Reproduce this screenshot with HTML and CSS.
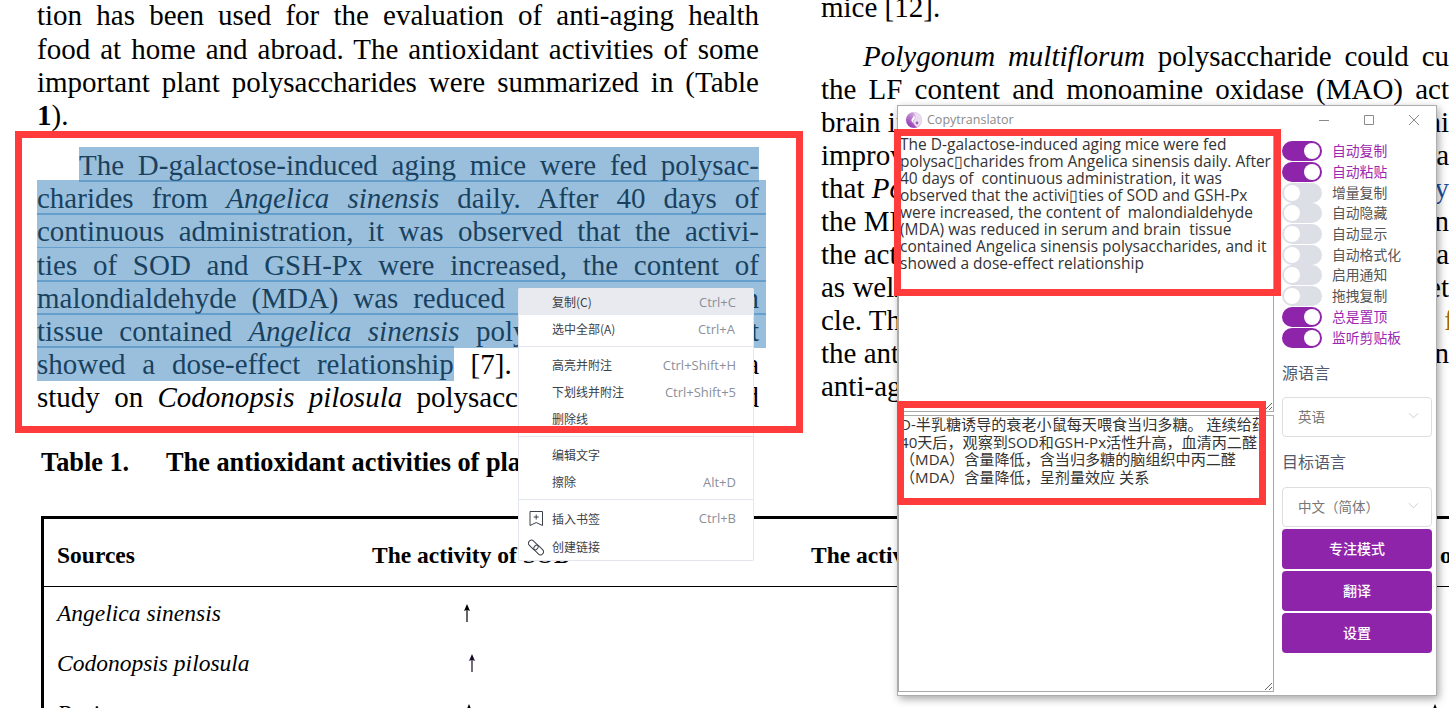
FILE: index.html
```html
<!DOCTYPE html>
<html lang="zh">
<head>
    <meta charset="UTF-8">
    <title>Copytranslator</title>
    <link rel="stylesheet" href="styles.css">
</head>
<body>
    <div class="pdf">
        <div class="col-left">
            <div class="line">tion has been used for the evaluation of anti-aging health</div>
            <div class="line">food at home and abroad. The antioxidant activities of some</div>
            <div class="line">important plant polysaccharides were summarized in (Table</div>
            <div class="line end"><b>1</b>).</div>

            <div class="line indent para"><span class="sel">The D-galactose-induced aging mice were fed polysac-</span></div>
            <div class="line"><span class="sel wide">charides from <i>Angelica sinensis</i> daily. After 40 days of</span></div>
            <div class="line"><span class="sel wide">continuous administration, it was observed that the activi-</span></div>
            <div class="line"><span class="sel wide">ties of SOD and GSH-Px were increased, the content of</span></div>
            <div class="line"><span class="sel wide">malondialdehyde (MDA) was reduced in serum and brain</span></div>
            <div class="line"><span class="sel wide">tissue contained <i>Angelica sinensis</i> polysaccharides, and it</span></div>
            <div class="line"><span class="sel">showed a dose-effect relationship</span> [7]. In another Chin a</div>
            <div class="line">study on <i>Codonopsis pilosula</i> polysaccharides it was used</div>

            <div class="caption"><span class="caption-no">Table 1.</span>The antioxidant activities of plant polysaccharides</div>
        </div>

        <div class="col-right">
            <div class="line end">mice [12].</div>
            <div class="line indent para2"><i>Polygonum multiflorum</i> polysaccharide could cu</div>
            <div class="line">the LF content and monoamine oxidase (MAO) act</div>
            <div class="line split"><span>brain in</span><span>ni</span></div>
            <div class="line split"><span>improv</span><span>ra</span></div>
            <div class="line split"><span>that <i>Po</i></span><span class="link">ly</span></div>
            <div class="line split"><span>the MD</span><span>in</span></div>
            <div class="line split"><span>the act</span><span>ra</span></div>
            <div class="line split"><span>as well</span><span>et</span></div>
            <div class="line split"><span>cle. Th</span><span class="ref">f</span></div>
            <div class="line split"><span>the ant</span><span>n</span></div>
            <div class="line end">anti-ag</div>
        </div>

        <div class="table">
            <div class="row head">
                <div class="cell-a">Sources</div>
                <div class="cell-b">The activity of SOD</div>
                <div class="cell-c">The activity of MDA</div>
                <div class="cell-d">o</div>
            </div>
            <div class="row">
                <div class="cell-a"><i>Angelica sinensis</i></div>
                <div class="cell-b"><svg class="arrow arrow-1" viewBox="0 0 8 18"><path d="M4 0 L7 7 L4.6 6 V18 H3.4 V6 L1 7 Z"/></svg></div>
            </div>
            <div class="row">
                <div class="cell-a"><i>Codonopsis pilosula</i></div>
                <div class="cell-b"><svg class="arrow arrow-2" viewBox="0 0 8 18"><path d="M4 0 L7 7 L4.6 6 V18 H3.4 V6 L1 7 Z"/></svg></div>
            </div>
            <div class="row">
                <div class="cell-a"><i>Poria</i></div>
                <div class="cell-b"><svg class="arrow arrow-3" viewBox="0 0 8 18"><path d="M4 0 L7 7 L4.6 6 V18 H3.4 V6 L1 7 Z"/></svg></div>
                <div class="cell-c"><svg class="arrow arrow-4" viewBox="0 0 8 18"><path d="M4 0 L7 7 L4.6 6 V18 H3.4 V6 L1 7 Z"/></svg></div>
            </div>
        </div>
    </div>

    <!-- 右键菜单 -->
    <div class="menu">
        <div class="menu-item hover"><span>复制(C)</span><span class="key">Ctrl+C</span></div>
        <div class="menu-item"><span>选中全部(A)</span><span class="key key-2">Ctrl+A</span></div>
        <div class="menu-sep"></div>
        <div class="menu-item"><span>高亮并附注</span><span class="key">Ctrl+Shift+H</span></div>
        <div class="menu-item"><span>下划线并附注</span><span class="key">Ctrl+Shift+5</span></div>
        <div class="menu-item"><span>删除线</span></div>
        <div class="menu-sep"></div>
        <div class="menu-item"><span>编辑文字</span></div>
        <div class="menu-item"><span>擦除</span><span class="key">Alt+D</span></div>
        <div class="menu-sep"></div>
        <div class="menu-item tall">
            <svg class="menu-icon" viewBox="0 0 16 17"><path d="M2 1.5 H14.5 V15.5 L8.2 12.5 L2 15.5 Z M8.2 4.5 V9.5 M5.7 7 H10.7"/></svg>
            <span>插入书签</span><span class="key">Ctrl+B</span>
        </div>
        <div class="menu-item tall">
            <svg class="menu-icon" viewBox="0 0 16 17">
                <rect x="-0.2" y="3" width="11" height="6" rx="3" transform="rotate(45 5.3 6)"/>
                <rect x="5.2" y="8" width="11" height="6" rx="3" transform="rotate(45 10.7 11)"/>
            </svg>
            <span>创建链接</span>
        </div>
    </div>

    <div class="mark mark-pdf"></div>

    <!-- 翻译窗口 -->
    <div class="window">
        <div class="titlebar">
            <svg class="logo" viewBox="0 0 16 16">
                <defs>
                    <linearGradient id="logoFill" x1="0.9" y1="0" x2="0.2" y2="1">
                        <stop offset="0" stop-color="#e3cdeb"/>
                        <stop offset="1" stop-color="#8e2fae"/>
                    </linearGradient>
                </defs>
                <circle cx="8" cy="8" r="8" fill="url(#logoFill)"/>
                <path d="M7 0 C10 3 10 6 8 8 C6 10 8 13 11 15.2 C14 14 16 11 16 8 C16 3.6 12 0 8 0 Z" fill="#e9dcef"/>
                <path d="M7.5 2.5 C9 4 9.5 6 8 7.5 C7 8.5 6.5 9.5 7 11 C5 9.5 5 7.5 6.5 6 C7.5 5 8 4 7.5 2.5 Z" fill="#fff"/>
                <circle cx="11" cy="11" r="1.4" fill="#a45cc0"/>
            </svg>
            <span class="title">Copytranslator</span>
            <div class="controls">
                <svg viewBox="0 0 10 10"><path d="M0 5.5 H10"/></svg>
                <svg viewBox="0 0 10 10"><path d="M.5 .5 H9.5 V9.5 H.5 Z"/></svg>
                <svg viewBox="0 0 10 10"><path d="M0 0 L10 10 M10 0 L0 10"/></svg>
            </div>
        </div>
        <div class="window-body">
            <div class="panes">
                <textarea class="pane pane-src" spellcheck="false">The D-galactose-induced aging mice were fed
polysac▯charides from Angelica sinensis daily. After
40 days of  continuous administration, it was
observed that the activi▯ties of SOD and GSH-Px
were increased, the content of  malondialdehyde
(MDA) was reduced in serum and brain  tissue
contained Angelica sinensis polysaccharides, and it
showed a dose-effect relationship</textarea>
                <textarea class="pane pane-dst" spellcheck="false">D-半乳糖诱导的衰老小鼠每天喂食当归多糖。 连续给药
40天后，观察到SOD和GSH-Px活性升高，血清丙二醛
（MDA）含量降低，含当归多糖的脑组织中丙二醛
（MDA）含量降低，呈剂量效应 关系</textarea>
            </div>
            <div class="side">
                <div class="switch-row on"><span class="switch"></span><span class="switch-label">自动复制</span></div>
                <div class="switch-row on"><span class="switch"></span><span class="switch-label">自动粘贴</span></div>
                <div class="switch-row"><span class="switch"></span><span class="switch-label">增量复制</span></div>
                <div class="switch-row"><span class="switch"></span><span class="switch-label">自动隐藏</span></div>
                <div class="switch-row"><span class="switch"></span><span class="switch-label">自动显示</span></div>
                <div class="switch-row"><span class="switch"></span><span class="switch-label">自动格式化</span></div>
                <div class="switch-row"><span class="switch"></span><span class="switch-label">启用通知</span></div>
                <div class="switch-row"><span class="switch"></span><span class="switch-label">拖拽复制</span></div>
                <div class="switch-row on"><span class="switch"></span><span class="switch-label">总是置顶</span></div>
                <div class="switch-row on"><span class="switch"></span><span class="switch-label">监听剪贴板</span></div>

                <div class="lang-label first">源语言</div>
                <div class="select"><span>英语</span><svg viewBox="0 0 12 7"><path d="M1 1 L6 6 L11 1"/></svg></div>
                <div class="lang-label">目标语言</div>
                <div class="select"><span>中文（简体）</span><svg viewBox="0 0 12 7"><path d="M1 1 L6 6 L11 1"/></svg></div>

                <button class="btn">专注模式</button>
                <button class="btn">翻译</button>
                <button class="btn">设置</button>
            </div>
        </div>
    </div>

    <div class="mark mark-src"></div>
    <div class="mark mark-dst"></div>
</body>
</html>
```

FILE: styles.css
```css
html, body { margin: 0; height: 100%; overflow: hidden; }
body {
  width: 1449px;
  height: 708px;
  position: relative;
  background: #fff;
  color: #000;
}

/* pdf page */
.pdf {
  display: grid;
  grid-template-columns: 722px 628px;
  column-gap: 62px;
  padding-left: 37px;
  height: 708px;
  overflow: hidden;
  font: 29px/33.2px "Liberation Serif", "Times New Roman", serif;
}
.col-left { min-width: 0; margin-top: -.6px; }
.col-right { min-width: 0; margin-top: -8.6px; }
.line { text-align: justify; text-align-last: justify; white-space: nowrap; height: 33.2px; }
.col-right .line { height: 33px; }
.line.end { text-align-last: left; }
.indent { padding-left: 42px; }
.para { margin-top: 16.8px; }
.para2 { margin-top: 15.6px; }
.split { display: flex; justify-content: space-between; }
.link { color: #1f4f9c; }
.ref { color: #a8620a; margin-right: -5px; }

.sel { position: relative; }
.sel::after {
  content: "";
  position: absolute;
  left: 0;
  right: 0;
  top: -2px;
  bottom: -1px;
  background: rgba(51, 127, 185, .5);
}
.sel.wide::after { right: -7px; }

.caption {
  margin: 33.2px 0 0 4px;
  font: bold 26.3px/30px "Liberation Serif", serif;
  white-space: nowrap;
}
.caption-no { display: inline-block; width: 125px; }

.table {
  grid-column: 1 / 3;
  margin: 38px 0 0 4px;
  border-top: 3px solid #000;
  border-left: 3px solid #000;
  font: 23.5px/30px "Liberation Serif", serif;
  width: 1410px;
}
.row { display: flex; height: 50px; box-sizing: border-box; padding-top: 3px; align-items: center; }
.row.head { height: 68px; padding: 5px 0 0 3px; border-bottom: 1px solid #000; font-weight: bold; margin-left: -3px; }
.cell-a { width: 328px; padding-left: 13px; box-sizing: border-box; flex: none; white-space: nowrap; }
.cell-b { width: 439px; flex: none; white-space: nowrap; }
.cell-c { width: 629px; flex: none; white-space: nowrap; }
.cell-d { flex: none; }
.arrow { display: block; width: 8px; height: 18px; fill: #000; }
.arrow-1 { margin-left: 91px; }
.arrow-2 { margin-left: 96px; fill: #1a0a2a; }
.arrow-3 { margin-left: 93px; }
.arrow-4 { margin-left: 620px; }

/* context menu */
.menu {
  position: absolute;
  left: 518px;
  top: 288px;
  width: 236px;
  height: 273px;
  box-sizing: border-box;
  background: #fff;
  border: 1px solid #e4e6ee;
  border-top: 0;
  border-radius: 2px;
  font: 12px "Noto Sans CJK SC", "Noto Sans", sans-serif;
  color: #3c4048;
}
.menu-item {
  height: 27px;
  display: flex;
  align-items: center;
  justify-content: space-between;
  padding: 0 17px 0 33px;
  position: relative;
}
.menu-item.hover { background: #e8eaef; }
.menu-item.tall { height: 28.5px; }
.menu-sep { height: 1px; background: #e4e6ee; margin: 4px 0; }
.key { color: #8b8f9a; font: 13px "Open Sans", sans-serif; }
.key-2 { margin-right: 1px; }
.menu-icon {
  position: absolute;
  left: 9px;
  top: 6px;
  width: 16px;
  height: 17px;
  fill: none;
  stroke: #3c4048;
  stroke-width: 1;
}

/* red annotation frames */
.mark { position: absolute; border: 7px solid #ff3b3b; box-sizing: border-box; }
.mark-pdf { left: 15px; top: 131px; width: 788px; height: 302px; }
.mark-src { left: 894px; top: 129px; width: 387px; height: 167px; }
.mark-dst { left: 897px; top: 401px; width: 369px; height: 104px; }

/* translator window */
.window {
  position: absolute;
  left: 897px;
  top: 105px;
  width: 540px;
  height: 591px;
  box-sizing: border-box;
  background: #fff;
  border: 1px solid #adadad;
  box-shadow: 2px 3px 8px rgba(0, 0, 0, .35);
  display: flex;
  flex-direction: column;
  font-family: "Open Sans", "Noto Sans CJK SC", sans-serif;
}
.titlebar { height: 24px; flex: none; display: flex; align-items: center; padding-left: 8px; padding-top: 3px; box-sizing: border-box; }
.logo { width: 16px; height: 16px; margin-right: 5px; }
.title { font-size: 12.5px; color: #8b8b8b; }
.controls { margin-left: auto; display: flex; gap: 35px; padding-right: 17px; }
.controls svg { width: 10px; height: 10px; fill: none; stroke: #8a8a8a; stroke-width: 1; }

.window-body { flex: 1; display: flex; min-height: 0; }
.panes { width: 376px; flex: none; display: flex; flex-direction: column; gap: 3px; padding-bottom: 3px; }
.pane {
  display: block;
  box-sizing: border-box;
  width: 100%;
  margin: 0;
  padding: 5px 1px 0 1px;
  border: 1px solid #a9a9a9;
  outline: 0;
  background: #fff;
  color: #333;
  font: 15.5px/17px "Open Sans", "Noto Sans CJK SC", sans-serif;
  white-space: pre;
  overflow: hidden;
  resize: both;
}
.pane-src { height: 282px; }
.pane-dst { flex: 1; padding-top: 0; font-size: 15.1px; line-height: 17.6px; }

.side { flex: 1; padding: 11px 4px 0 8px; min-width: 0; }
.switch-row {
  height: 20.7px;
  display: flex;
  align-items: center;
  gap: 10px;
  font: 13.8px "Noto Sans CJK SC", sans-serif;
  color: #555;
}
.switch-label { padding-bottom: 2px; }
.switch {
  width: 40px;
  height: 20px;
  flex: none;
  box-sizing: border-box;
  border-radius: 10px;
  background: #dcdfe6;
  position: relative;
}
.switch::after {
  content: "";
  position: absolute;
  left: 2px;
  top: 2px;
  width: 16px;
  height: 16px;
  border-radius: 50%;
  background: #fff;
}
.switch-row.on { color: #9c27b0; }
.switch-row.on .switch { background: #8e24aa; }
.switch-row.on .switch::after { left: 22px; }

.lang-label { font: 16px/18px "Noto Sans CJK SC", sans-serif; color: #515a6e; margin: 15px 0 17px; }
.lang-label.first { margin-bottom: 16px; }
.select {
  height: 40px;
  box-sizing: border-box;
  border: 1px solid #dcdee2;
  border-radius: 4px;
  display: flex;
  align-items: center;
  justify-content: space-between;
  padding: 0 12px 2px 15px;
  font: 13.5px "Noto Sans CJK SC", sans-serif;
  color: #777;
}
.select svg { width: 11px; height: 7px; fill: none; stroke: #c8c8c8; stroke-width: 1; }
.btn {
  display: block;
  width: 100%;
  height: 40px;
  margin-top: 2px;
  padding: 0 0 2px;
  border: none;
  border-radius: 4px;
  background: #8e24aa;
  color: #fff;
  font: 500 14px "Noto Sans CJK SC", sans-serif;
  cursor: pointer;
}
```
